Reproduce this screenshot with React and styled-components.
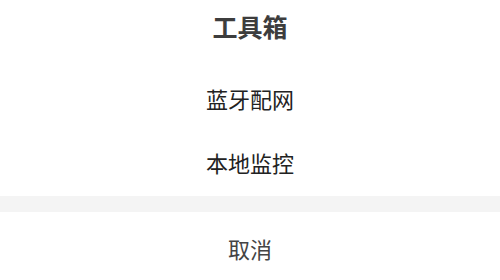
import styled, { createGlobalStyle } from "styled-components";

const GlobalStyle = createGlobalStyle`
  html, body {
    margin: 0;
    padding: 0;
    background: #ffffff;
  }
  body {
    font-family: "Noto Sans CJK SC", "Noto Sans", sans-serif;
  }
  * {
    box-sizing: border-box;
  }
`;

const Sheet = styled.div`
  width: 500px;
  height: 280px;
  overflow: hidden;
  background: #ffffff;
  display: flex;
  flex-direction: column;
  & > * {
    flex-shrink: 0;
  }
`;

const Title = styled.div`
  height: 56px;
  padding-bottom: 4px;
  display: flex;
  align-items: center;
  justify-content: center;
  font-size: 25px;
  font-weight: 700;
  color: #3d3d3d;
`;

const List = styled.div`
  padding-top: 12px;
  display: flex;
  flex-direction: column;
`;

const Item = styled.div`
  height: 64px;
  padding-bottom: 4px;
  display: flex;
  align-items: center;
  justify-content: center;
  font-size: 22px;
  color: ${(p) => p.color || "#222222"};
  cursor: pointer;
`;

const Gap = styled.div`
  height: 16px;
  background: #f4f4f4;
`;

const Cancel = styled(Item)`
  height: 76px;
`;

const App = () => {
  return (
    <>
      <GlobalStyle />
      <Sheet>
        <Title>工具箱</Title>
        <List>
          <Item>蓝牙配网</Item>
          <Item>本地监控</Item>
        </List>
        <Gap />
        <Cancel color="#444444">取消</Cancel>
      </Sheet>
    </>
  );
};

export default App;
